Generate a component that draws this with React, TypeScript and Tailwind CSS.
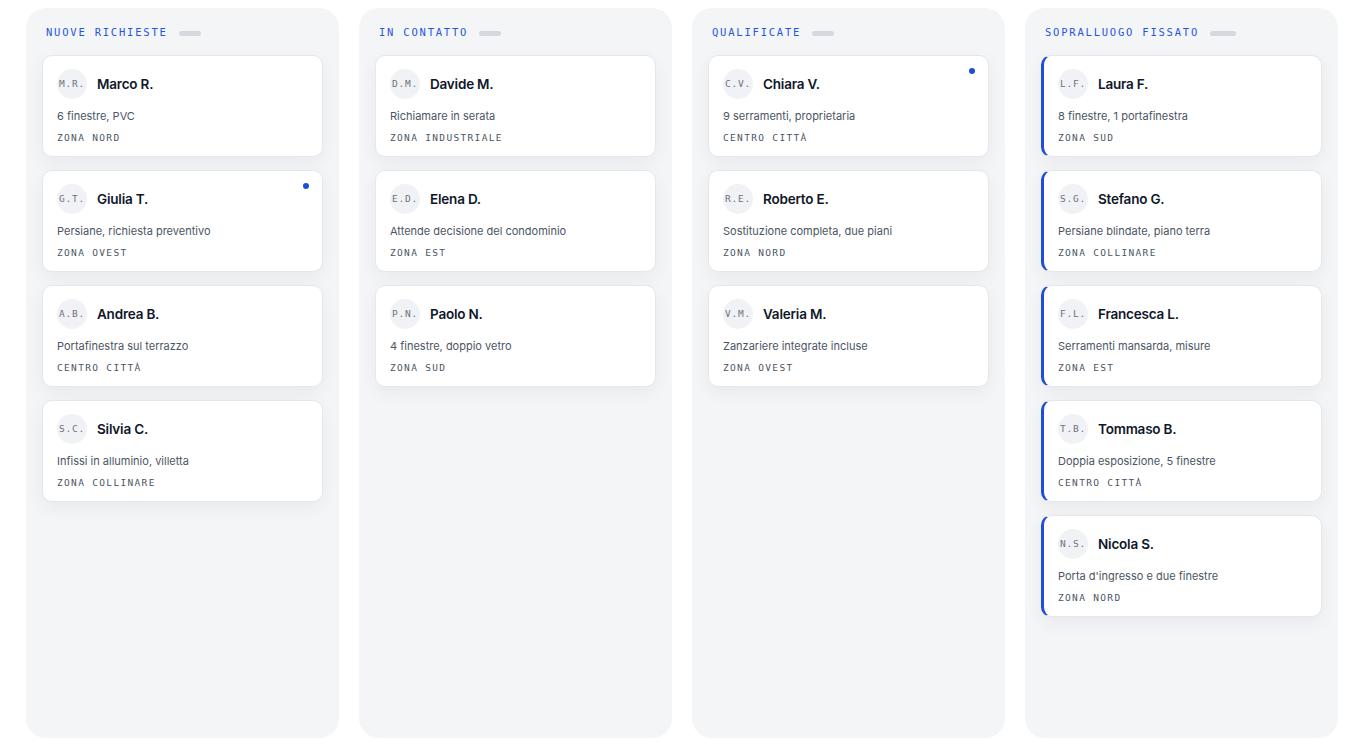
type Lead = {
  initials: string;
  name: string;
  note: string;
  zone: string;
  dot?: boolean;
};

type Column = {
  title: string;
  scheduled?: boolean;
  leads: Lead[];
};

const columns: Column[] = [
  {
    title: 'Nuove richieste',
    leads: [
      { initials: 'M.R.', name: 'Marco R.', note: '6 finestre, PVC', zone: 'Zona Nord' },
      { initials: 'G.T.', name: 'Giulia T.', note: 'Persiane, richiesta preventivo', zone: 'Zona Ovest', dot: true },
      { initials: 'A.B.', name: 'Andrea B.', note: 'Portafinestra sul terrazzo', zone: 'Centro città' },
      { initials: 'S.C.', name: 'Silvia C.', note: 'Infissi in alluminio, villetta', zone: 'Zona Collinare' },
    ],
  },
  {
    title: 'In contatto',
    leads: [
      { initials: 'D.M.', name: 'Davide M.', note: 'Richiamare in serata', zone: 'Zona Industriale' },
      { initials: 'E.D.', name: 'Elena D.', note: 'Attende decisione del condominio', zone: 'Zona Est' },
      { initials: 'P.N.', name: 'Paolo N.', note: '4 finestre, doppio vetro', zone: 'Zona Sud' },
    ],
  },
  {
    title: 'Qualificate',
    leads: [
      { initials: 'C.V.', name: 'Chiara V.', note: '9 serramenti, proprietaria', zone: 'Centro città', dot: true },
      { initials: 'R.E.', name: 'Roberto E.', note: 'Sostituzione completa, due piani', zone: 'Zona Nord' },
      { initials: 'V.M.', name: 'Valeria M.', note: 'Zanzariere integrate incluse', zone: 'Zona Ovest' },
    ],
  },
  {
    title: 'Sopralluogo fissato',
    scheduled: true,
    leads: [
      { initials: 'L.F.', name: 'Laura F.', note: '8 finestre, 1 portafinestra', zone: 'Zona Sud' },
      { initials: 'S.G.', name: 'Stefano G.', note: 'Persiane blindate, piano terra', zone: 'Zona Collinare' },
      { initials: 'F.L.', name: 'Francesca L.', note: 'Serramenti mansarda, misure', zone: 'Zona Est' },
      { initials: 'T.B.', name: 'Tommaso B.', note: 'Doppia esposizione, 5 finestre', zone: 'Centro città' },
      { initials: 'N.S.', name: 'Nicola S.', note: "Porta d'ingresso e due finestre", zone: 'Zona Nord' },
    ],
  },
];

const mono = "font-['DejaVu_Sans_Mono','Liberation_Mono',monospace]";

const LeadCard = ({ lead, scheduled }: { lead: Lead; scheduled?: boolean }) => (
  <div
    className={
      'relative rounded-[10px] border border-[#e5e7eb] bg-white pt-[13px] pb-[11px] pl-[14px] pr-[14px] shadow-[0_6px_18px_rgba(15,23,42,0.05)] ' +
      (scheduled ? 'border-l-[3px] border-l-[#1d4ed8]' : '')
    }
  >
    {lead.dot && <span className="absolute right-[13px] top-[12px] h-[6px] w-[6px] rounded-full bg-[#1d4ed8]" />}
    <div className="flex items-center gap-[10px]">
      <div className={`flex h-[30px] w-[30px] items-center justify-center rounded-full bg-[#f1f2f5] text-[9.5px] tracking-[0.08em] text-[#6b7280] ${mono}`}>
        {lead.initials}
      </div>
      <span className="text-[13.5px] font-semibold tracking-[-0.015em] text-[#0f172a]">{lead.name}</span>
    </div>
    <p className="mt-[9px] text-[11px] leading-[16px] text-[#4b5563]">{lead.note}</p>
    <p className={`mt-[7px] text-[9.5px] uppercase leading-[14px] tracking-[0.14em] text-[#4b5563] ${mono}`}>{lead.zone}</p>
  </div>
);

export default function App() {
  return (
    <div className="min-h-screen bg-white font-['Inter','Liberation_Sans',sans-serif]">
      <div className="grid h-[746px] grid-cols-4 gap-5 pb-2 pl-[26px] pr-[27px] pt-2">
        {columns.map((col) => (
          <div key={col.title} className="rounded-[20px] bg-[#f4f5f7] px-[16px] pt-[18px]">
            <div className="mb-[15px] flex h-[14px] items-center gap-[11px] pl-[4px]">
              <span className={`text-[10.5px] uppercase tracking-[0.17em] text-[#2556e0] ${mono}`}>{col.title}</span>
              <span className={`h-[5px] rounded-full bg-[#d5d8de] ${col.scheduled ? 'w-[26px]' : 'w-[22px]'}`} />
            </div>
            <div className="flex flex-col gap-[13px]">
              {col.leads.map((lead) => (
                <LeadCard key={lead.name} lead={lead} scheduled={col.scheduled} />
              ))}
            </div>
          </div>
        ))}
      </div>
    </div>
  );
}
